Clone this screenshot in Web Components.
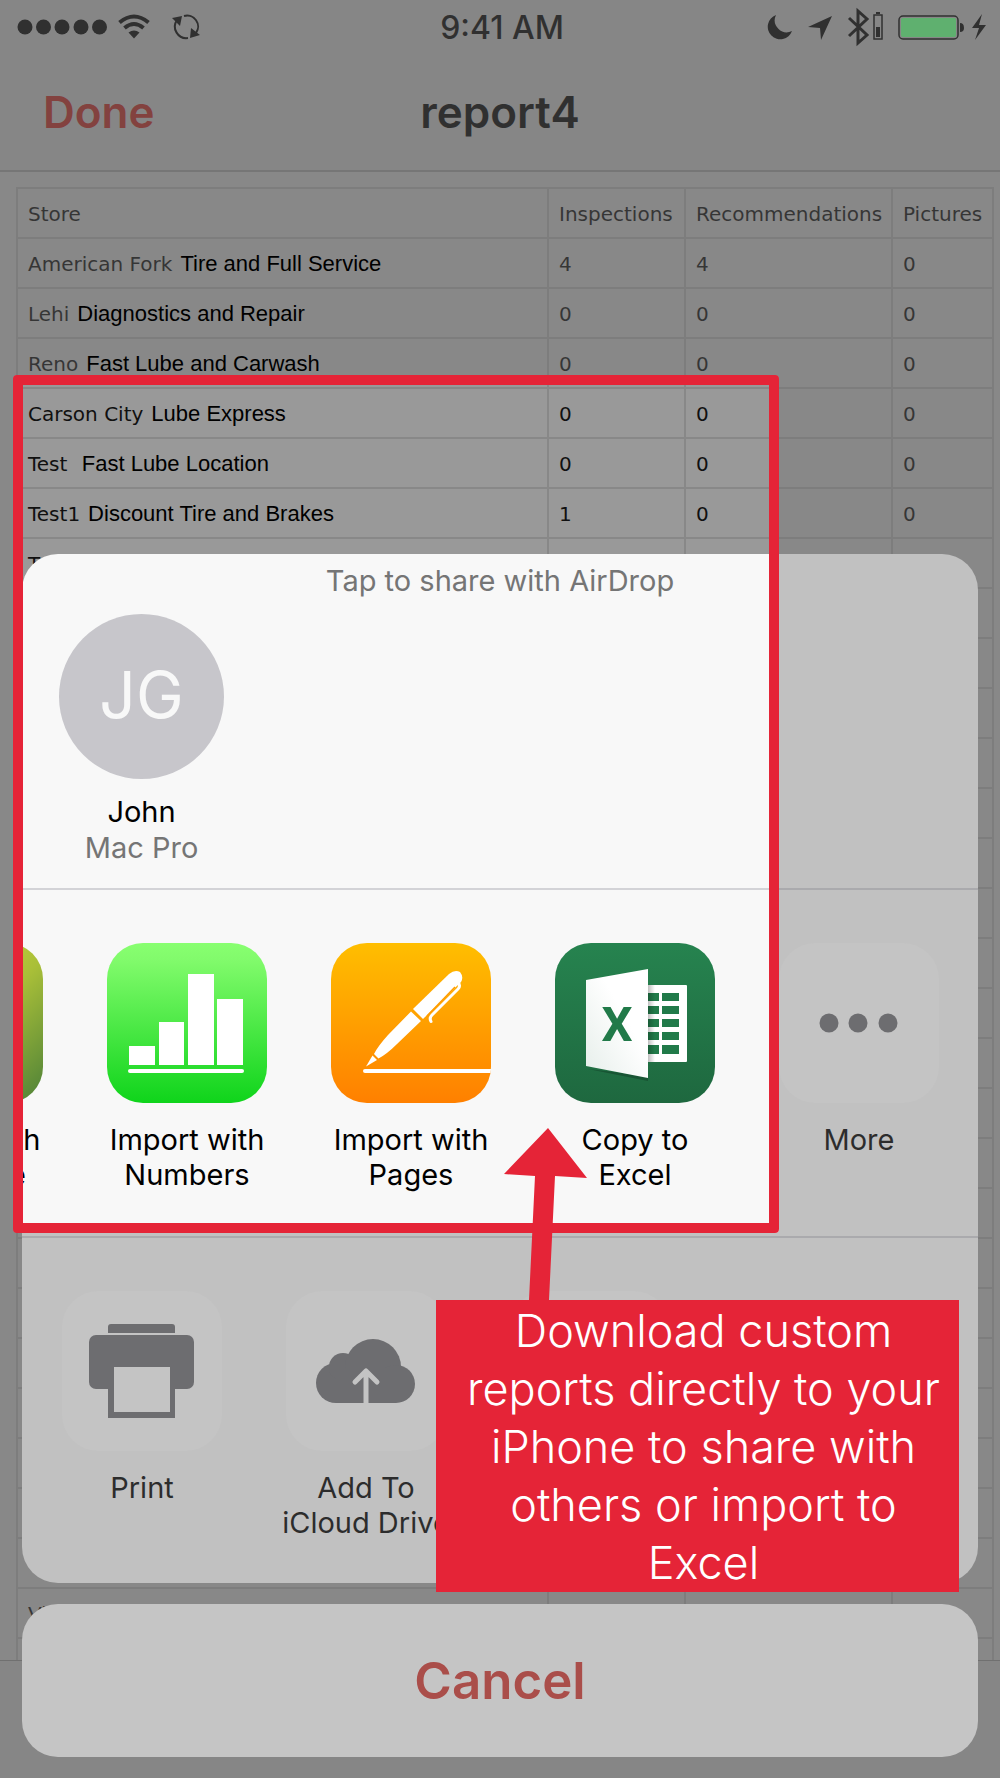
<!DOCTYPE html>
<html lang="en">
<head>
<meta charset="utf-8">
<meta name="viewport" content="width=device-width, initial-scale=1">
<title>report4</title>
<style>
  body {
    margin: 0;
    font-family: Inter, "Liberation Sans", sans-serif;
  }
</style>
</head>
<body>
<report-screen>
  <status-bar slot="top" time="9:41 AM"></status-bar>
  <nav-bar slot="top" heading="report4">Done</nav-bar>
  <report-table></report-table>
  <share-sheet slot="overlay">
    <airdrop-contact slot="airdrop" initials="JG" name="John" device="Mac Pro"></airdrop-contact>
    <share-action slot="apps" icon="leaf">Import with<br>Envelope</share-action>
    <share-action slot="apps" icon="numbers">Import with<br>Numbers</share-action>
    <share-action slot="apps" icon="pages">Import with<br>Pages</share-action>
    <share-action slot="apps" icon="excel">Copy to<br>Excel</share-action>
    <share-action slot="apps" icon="more">More</share-action>
    <share-action slot="actions" icon="print">Print</share-action>
    <share-action slot="actions" icon="cloud">Add To<br>iCloud Drive</share-action>
    <share-action slot="actions"></share-action>
  </share-sheet>
  <tour-spotlight slot="overlay"></tour-spotlight>
  <tour-callout slot="overlay">Download custom reports directly to your iPhone to share with others or import to Excel</tour-callout>
</report-screen>

<script>
const ICONS = {
  leaf: `
    <defs><linearGradient id="g" x1="0" y1="0" x2="1" y2="1">
      <stop offset="0" stop-color="#e4e83a"/><stop offset="0.55" stop-color="#a9bf38"/><stop offset="1" stop-color="#4c8038"/>
    </linearGradient></defs>
    <rect width="160" height="160" rx="36" fill="url(#g)"/>`,
  numbers: `
    <defs><linearGradient id="g" x1="0" y1="0" x2="0" y2="1">
      <stop offset="0" stop-color="#88ff70"/><stop offset="0.1" stop-color="#82fb6c"/><stop offset="1" stop-color="#0fd41b"/>
    </linearGradient></defs>
    <rect width="160" height="160" rx="36" fill="url(#g)"/>
    <g fill="#fff">
      <rect x="22" y="103" width="26" height="19"/>
      <rect x="52" y="79" width="25" height="43"/>
      <rect x="81" y="31" width="26" height="91"/>
      <rect x="110" y="56" width="26" height="66"/>
      <rect x="21" y="126" width="116" height="4" rx="2"/>
    </g>`,
  pages: `
    <defs><linearGradient id="g" x1="0" y1="0" x2="0" y2="1">
      <stop offset="0" stop-color="#ffbe00"/><stop offset="1" stop-color="#ff8000"/>
    </linearGradient></defs>
    <rect width="160" height="160" rx="36" fill="url(#g)"/>
    <g fill="#fff">
      <path d="M82 66 L118 31 Q124 26 129 29 Q133 34 130 39 L92 76 Z"/>
      <path d="M80 68.500 L90 78 L66 101 Q56 111 47.500 115.500 L43 111 Q47 103 57 92 Z"/>
      <path d="M41.500 112.500 L46 117 L35 123.500 Z"/>
      <path d="M160 126 H34 a2 2 0 0 0 0 4 H159.500 Z"/>
    </g>
    <path d="M127 39 Q130 43 127 46 L101 72 Q98 75 100 78.500" fill="none" stroke="#fff" stroke-width="3" stroke-linecap="round"/>
    <path d="M96 73 L124 44" stroke="#ff9c00" stroke-width="1.500"/>`,
  excel: `
    <defs>
      <linearGradient id="g" x1="0" y1="0" x2="0" y2="1">
        <stop offset="0" stop-color="#26834f"/><stop offset="1" stop-color="#1e683f"/>
      </linearGradient>
      <linearGradient id="d" x1="1" y1="0" x2="0" y2="1">
        <stop offset="0.400" stop-color="#fff"/><stop offset="1" stop-color="#e6eeea"/>
      </linearGradient>
      <linearGradient id="s"><stop offset="0" stop-opacity="0.250"/><stop offset="1" stop-opacity="0"/></linearGradient>
    </defs>
    <rect width="160" height="160" rx="36" fill="url(#g)"/>
    <rect x="90" y="42" width="42" height="77" rx="1" fill="#fff"/>
    <g fill="#217a49">
      <path d="M93 50h11v8h-11z M93 63h11v8h-11z M93 76h11v8h-11z M93 89h11v8h-11z M93 102h11v9h-11z"/>
      <path d="M107 50h17v8h-17z M107 63h17v8h-17z M107 76h17v8h-17z M107 89h17v8h-17z M107 102h17v9h-17z"/>
    </g>
    <rect x="93" y="42" width="7" height="77" fill="url(#s)"/>
    <path d="M33 126 L93 138 V133 Z" fill="#185534"/>
    <path d="M31 37 L93 26 V135 L31 123 Z" fill="url(#d)"/>
    <text x="62" y="98" text-anchor="middle" font-family="Roboto, sans-serif" font-weight="700" font-size="49" fill="#217a49">X</text>`,
  more: `
    <rect width="160" height="160" rx="36" fill="#fdfdfd"/>
    <g fill="#6d6d72"><circle cx="50" cy="80" r="9.500"/><circle cx="79" cy="80" r="9.500"/><circle cx="109" cy="80" r="9.500"/></g>`,
  print: `
    <rect width="160" height="160" rx="36" fill="#fdfdfd"/>
    <g fill="#6d6d72">
      <path d="M46 42 V36 Q46 33 49 33 H110 Q113 33 113 36 V42 Z"/>
      <rect x="27" y="44" width="105" height="54" rx="7"/>
      <rect x="46" y="90" width="67" height="37"/>
    </g>
    <rect x="52" y="76" width="56" height="45" fill="#fdfdfd"/>`,
  cloud: `
    <rect width="160" height="160" rx="36" fill="#fdfdfd"/>
    <g fill="#6d6d72">
      <circle cx="50" cy="92" r="20"/><circle cx="57" cy="76" r="14"/>
      <circle cx="87" cy="76" r="28"/><circle cx="110" cy="93" r="19"/>
      <rect x="50" y="78" width="60" height="34"/>
    </g>
    <path d="M80 113 V81 M69 91 L80 80 L91 91" fill="none" stroke="#fdfdfd" stroke-width="5" stroke-linecap="round" stroke-linejoin="round"/>`,
  blank: `<rect width="160" height="160" rx="36" fill="#fdfdfd"/>`
};

class ReportScreen extends HTMLElement {
  constructor() {
    super();
    this.attachShadow({ mode: "open" });
    this.shadowRoot.innerHTML = `
      <style>
        :host {
          position: relative;
          display: flex;
          flex-direction: column;
          height: 100vh;
          overflow: hidden;
          isolation: isolate;
          background: #999;
        }
        main {
          flex: 1;
          min-height: 0;
          overflow: hidden;
          padding: 15px 6px 0 16px;
        }
        footer {
          height: 117px;
          flex: none;
          border-top: 1px solid #727272;
          background: #969696;
        }
      </style>
      <slot name="top"></slot>
      <main><slot></slot></main>
      <footer></footer>
      <slot name="overlay"></slot>
    `;
  }
}

class StatusBar extends HTMLElement {
  constructor() {
    super();
    this.attachShadow({ mode: "open" });
    this.shadowRoot.innerHTML = `
      <style>
        :host {
          display: grid;
          grid-template-columns: 1fr auto 1fr;
          align-items: center;
          height: 54px;
          padding: 0 13px 0 17px;
          background: #979797;
          font-size: 32px;
          font-weight: 500;
          color: #080808;
        }
        div { display: flex; align-items: center; }
        .right { justify-content: flex-end; }
        svg { display: block; fill: #080808; }
      </style>
      <div class="left">
        <svg width="184" height="40" viewBox="0 0 184 40">
          <circle cx="8" cy="20" r="7.500"/><circle cx="26.500" cy="20" r="7.500"/><circle cx="45" cy="20" r="7.500"/><circle cx="64" cy="20" r="7.500"/><circle cx="82.500" cy="20" r="7.500"/>
          <g fill="none" stroke="#080808" stroke-width="4">
            <path d="M102.500 15.500 Q117 3.500 131.500 15.500"/>
            <path d="M107.500 21 Q117 13 126.500 21"/>
          </g>
          <path d="M111.500 25.500 Q117 21.500 122.500 25.500 L117 31.500 Z"/>
          <g fill="none" stroke="#080808" stroke-width="2">
            <path d="M167 9 A11 11 0 0 1 179 26"/>
            <path d="M171 31 A11.500 11.500 0 0 1 160 13"/>
          </g>
          <path d="M155 11 L165 9 L163 19 Z M183 28 L173 31 L174 21 Z"/>
        </svg>
      </div>
      <span class="time"></span>
      <div class="right">
        <svg width="220" height="40" viewBox="0 0 220 40">
          <path d="M9 8 A12.500 12.500 0 1 0 25 24 A12 12 0 0 1 9 8 Z"/>
          <path d="M65 9 L54 33 L53 21 L41 20 Z"/>
          <path d="M82 11 L100 28 L91 36 V4 L100 12 L82 29" fill="none" stroke="#080808" stroke-width="3"/>
          <rect x="107" y="8" width="8" height="24" fill="none" stroke="#080808" stroke-width="1.500"/>
          <rect x="109" y="20" width="4" height="10"/><rect x="109" y="5" width="4" height="2"/>
          <rect x="132" y="9" width="59" height="23" rx="4" fill="none" stroke="#080808" stroke-width="1.500"/>
          <rect x="134" y="11" width="55" height="19" rx="2" fill="#55dd70"/>
          <path d="M193 16 Q197 16 197 21 Q197 25 193 25 Z"/>
          <path d="M215 7 L205 21 H212 L208 33 L219 18 H212 Z"/>
        </svg>
      </div>
    `;
  }

  connectedCallback() {
    this.shadowRoot.querySelector(".time").textContent = this.getAttribute("time");
  }
}

class NavBar extends HTMLElement {
  constructor() {
    super();
    this.attachShadow({ mode: "open" });
    this.shadowRoot.innerHTML = `
      <style>
        :host {
          display: grid;
          grid-template-columns: 1fr auto 1fr;
          align-items: center;
          height: 116px;
          padding: 0 43px;
          border-bottom: 2px solid #7c7c7c;
          background: #979797;
        }
        button {
          justify-self: start;
          padding: 0;
          border: 0;
          background: none;
          font: 600 44px Inter, sans-serif;
          color: #922520;
        }
        h1 { margin: 0; font-size: 44px; font-weight: 600; color: #080808; }
      </style>
      <button type="button"><slot></slot></button>
      <h1></h1>
    `;
  }

  connectedCallback() {
    this.shadowRoot.querySelector("h1").textContent = this.getAttribute("heading");
  }
}

class ReportTable extends HTMLElement {
  constructor() {
    super();
    this._rows = [
      ["American Fork", "Tire and Full Service", 4, 4, 0],
      ["Lehi", "Diagnostics and Repair", 0, 0, 0],
      ["Reno", "Fast Lube and Carwash", 0, 0, 0],
      ["Carson City", "Lube Express", 0, 0, 0],
      ["Test\u00a0", "Fast Lube Location", 0, 0, 0],
      ["Test1", "Discount Tire and Brakes", 1, 0, 0],
      ["Test2", "", "", "", ""]
    ];
    for (let i = 0; i < 20; i++) this._rows.push(["", "", "", "", ""]);
    this._rows.push(["Vi", "", "", "", ""], ["", "", "", "", ""]);

    this.attachShadow({ mode: "open" });
    this.shadowRoot.innerHTML = `
      <style>
        :host {
          display: block;
          font-family: "DejaVu Sans", sans-serif;
          font-size: 20px;
          line-height: 22px;
          color: #101010;
        }
        table { width: 100%; table-layout: fixed; border-collapse: collapse; }
        th, td {
          height: 22px;
          padding: 14px 10px 12px;
          border: 2px solid #888;
          font-weight: 400;
          text-align: left;
          white-space: nowrap;
        }
        .n { width: 115px; }
        .r { width: 185px; }
        .p { width: 79px; }
        .type {
          position: relative;
          z-index: 3;
          margin-left: 8px;
          font-family: "Liberation Sans", sans-serif;
          font-size: 22px;
          color: #000;
        }
      </style>
      <table>
        <thead>
          <tr><th>Store</th><th class="n">Inspections</th><th class="r">Recommendations</th><th class="p">Pictures</th></tr>
        </thead>
        <tbody></tbody>
      </table>
    `;
  }

  connectedCallback() {
    const body = this.shadowRoot.querySelector("tbody");
    body.innerHTML = this._rows.map(([store, type, ...counts]) => `
      <tr>
        <td>${store}${type ? `<span class="type">${type}</span>` : ""}</td>
        ${counts.map(c => `<td>${c}</td>`).join("")}
      </tr>`).join("");
  }
}

class ShareSheet extends HTMLElement {
  constructor() {
    super();
    this.attachShadow({ mode: "open" });
    this.shadowRoot.innerHTML = `
      <style>
        :host {
          position: absolute;
          z-index: 1;
          left: 22px;
          right: 22px;
          bottom: 21px;
          display: flex;
          flex-direction: column;
          gap: 21px;
        }
        .panel {
          overflow: hidden;
          border-radius: 36px;
          background: #f8f8f8;
        }
        section { box-sizing: border-box; height: 346px; }
        section + section { border-top: 2px solid #d3d3d7; }
        .airdrop { height: 334px; padding: 9px 37px 0; }
        h2 {
          margin: 0 0 16px;
          font-size: 29px;
          font-weight: 400;
          line-height: 35px;
          text-align: center;
          color: #757575;
        }
        .row { display: flex; gap: 64px; padding-top: 53px; }
        /* app row is scrolled past its first item */
        .apps { height: 348px; margin-left: -139px; }
        .actions { padding-left: 40px; height: 347px; }
        .cancel {
          height: 153px;
          border: 0;
          border-radius: 36px;
          background: #fff;
          font: 600 51px Inter, sans-serif;
          color: #d33932;
        }
      </style>
      <div class="panel">
        <section class="airdrop">
          <h2>Tap to share with AirDrop</h2>
          <slot name="airdrop"></slot>
        </section>
        <section class="row apps"><slot name="apps"></slot></section>
        <section class="row actions"><slot name="actions"></slot></section>
      </div>
      <button class="cancel" type="button">Cancel</button>
    `;
  }
}

class AirdropContact extends HTMLElement {
  constructor() {
    super();
    this.attachShadow({ mode: "open" });
    this.shadowRoot.innerHTML = `
      <style>
        :host { display: block; width: 165px; }
        button {
          display: block;
          width: 100%;
          padding: 0;
          border: 0;
          background: none;
          font: 400 29px/36px Inter, sans-serif;
          color: #000;
        }
        .avatar {
          display: block;
          height: 165px;
          margin-bottom: 15px;
          border-radius: 50%;
          background: #c7c6cb;
          font-size: 64px;
          line-height: 162px;
          color: #f8f8f8;
        }
        .name, .device { display: block; }
        .device { color: #757575; }
      </style>
      <button type="button">
        <span class="avatar"></span>
        <span class="name"></span>
        <span class="device"></span>
      </button>
    `;
  }

  connectedCallback() {
    this.shadowRoot.querySelector(".avatar").textContent = this.getAttribute("initials");
    this.shadowRoot.querySelector(".name").textContent = this.getAttribute("name");
    this.shadowRoot.querySelector(".device").textContent = this.getAttribute("device");
  }
}

class ShareAction extends HTMLElement {
  constructor() {
    super();
    this.attachShadow({ mode: "open" });
    this.shadowRoot.innerHTML = `
      <style>
        :host { display: block; flex: none; width: 160px; }
        button {
          display: flex;
          flex-direction: column;
          align-items: center;
          gap: 19px;
          width: 100%;
          padding: 0;
          border: 0;
          background: none;
          font: 400 29px/35px Inter, sans-serif;
          white-space: nowrap;
          color: #000;
        }
        svg { display: block; width: 160px; height: 160px; }
      </style>
      <button type="button">
        <svg viewBox="0 0 160 160" aria-hidden="true"></svg>
        <span><slot></slot></span>
      </button>
    `;
  }

  connectedCallback() {
    const name = this.getAttribute("icon") || "blank";
    this.shadowRoot.querySelector("svg").innerHTML = ICONS[name];
  }
}

class TourSpotlight extends HTMLElement {
  constructor() {
    super();
    this.attachShadow({ mode: "open" });
    // the spread shadow greys out everything around the frame
    this.shadowRoot.innerHTML = `
      <style>
        :host {
          position: absolute;
          z-index: 2;
          top: 375px;
          left: 13px;
          right: 221px;
          bottom: 545px;
          border: 10px solid #e52437;
          border-radius: 4px;
          box-shadow: 0 0 0 2000px rgba(110, 110, 110, 0.4);
          pointer-events: none;
        }
      </style>
    `;
  }
}

class TourCallout extends HTMLElement {
  constructor() {
    super();
    this.attachShadow({ mode: "open" });
    this.shadowRoot.innerHTML = `
      <style>
        :host {
          position: absolute;
          z-index: 4;
          right: 41px;
          bottom: 186px;
          width: 523px;
        }
        p {
          margin: 0;
          padding: 2px 12px 0 24px;
          background: #e52437;
          font-size: 45px;
          font-weight: 300;
          line-height: 58px;
          text-align: center;
          color: #fff;
        }
        svg {
          display: block;
          margin-left: 68px;
          fill: #e52437;
        }
      </style>
      <svg width="84" height="172" viewBox="0 0 84 172" aria-hidden="true">
        <path d="M44 0 L83 50 L51 48 L45 172 H25 L31 48 L0 46 Z"/>
      </svg>
      <p><slot></slot></p>
    `;
  }
}

customElements.define("report-screen", ReportScreen);
customElements.define("status-bar", StatusBar);
customElements.define("nav-bar", NavBar);
customElements.define("report-table", ReportTable);
customElements.define("share-sheet", ShareSheet);
customElements.define("airdrop-contact", AirdropContact);
customElements.define("share-action", ShareAction);
customElements.define("tour-spotlight", TourSpotlight);
customElements.define("tour-callout", TourCallout);
</script>
</body>
</html>
